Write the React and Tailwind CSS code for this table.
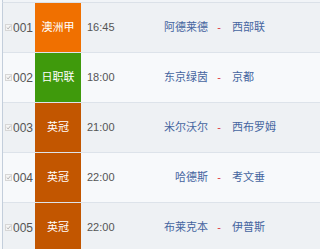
const matches = [
  { no: "001", league: "澳洲甲", color: "bg-[#f07000]", time: "16:45", home: "阿德莱德", away: "西部联" },
  { no: "002", league: "日职联", color: "bg-[#3f9a0c]", time: "18:00", home: "东京绿茵", away: "京都" },
  { no: "003", league: "英冠", color: "bg-[#c25600]", time: "21:00", home: "米尔沃尔", away: "西布罗姆" },
  { no: "004", league: "英冠", color: "bg-[#c25600]", time: "22:00", home: "哈德斯", away: "考文垂" },
  { no: "005", league: "英冠", color: "bg-[#c25600]", time: "22:00", home: "布莱克本", away: "伊普斯" },
];

function Check() {
  return (
    <span className="w-[7px] h-[7px] border border-[#d6d6d6] bg-[#f4f4f4] flex items-center justify-center">
      <svg width="7" height="7" viewBox="0 0 7 7" fill="none">
        <path d="M1 3.5 L3 5.5 L6.5 1" stroke="#9a9a9a" strokeWidth="1" />
      </svg>
    </span>
  );
}

export default function App() {
  return (
    <div
      className="w-[320px] h-[249px] overflow-hidden bg-[#f7f9fb]"
      style={{ fontFamily: '"Liberation Sans", Arial, "Noto Sans CJK SC", sans-serif' }}
    >
      <div className="h-[2px] ml-[2px] border-l border-[#c3cedb] bg-[#f1f4f7]" />
      <div className="ml-[2px] border-l border-t border-[#c3cedb] border-t-[#dbe1e8]">
        {matches.map((m, i) => (
          <div
            key={m.no}
            className={`flex items-stretch h-[50px] border-b border-[#dde3ea] ${
              i % 2 === 0 ? "bg-[#eef1f4]" : "bg-[#f7f9fb]"
            }`}
          >
            <div className="w-[32px] flex items-center pl-[2px] gap-[1px]">
              <Check />
              <span className="text-[12px] text-[#555]">{m.no}</span>
            </div>
            <div
              className={`w-[46px] ${m.color} flex items-center justify-center text-[11px] text-white`}
            >
              {m.league}
            </div>
            <div className="w-[56px] pl-[6px] flex items-center text-[11px] text-[#555]">
              {m.time}
            </div>
            <div className="w-[71px] flex items-center justify-end text-[11px] text-[#4565a0]">
              {m.home}
            </div>
            <div className="w-[22px] flex items-center justify-center text-[11px] text-[#e0393e]">
              -
            </div>
            <div className="flex-1 pl-[2px] flex items-center text-[11px] text-[#4565a0]">
              {m.away}
            </div>
          </div>
        ))}
      </div>
    </div>
  );
}
